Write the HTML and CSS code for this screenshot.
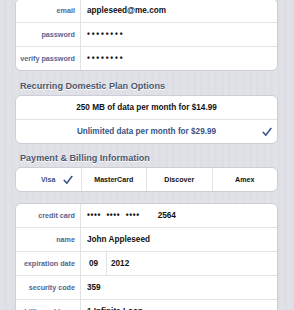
FILE: index.html
```html
<!DOCTYPE html>
<html>
<head>
<meta charset="utf-8">
<link rel="stylesheet" href="styles.css">
</head>
<body>
<div class="page">
  <section class="card card-account">
    <div class="row"><div class="label">email</div><div class="value">appleseed@me.com</div></div>
    <div class="row"><div class="label">password</div><div class="value dots">••••••••</div></div>
    <div class="row"><div class="label">verify password</div><div class="value dots">••••••••</div></div>
  </section>

  <h2 class="header header-plan">Recurring Domestic Plan Options</h2>
  <section class="card">
    <div class="option">250 MB of data per month for $14.99</div>
    <div class="option selected">Unlimited data per month for $29.99
      <svg class="check check-option" width="10" height="9" viewBox="0 0 10 9"><path d="M1.2 4.8 L3.8 7.8 L9 0.8" fill="none" stroke="#385487" stroke-width="1.5" stroke-linecap="round" stroke-linejoin="round"/></svg>
    </div>
  </section>

  <h2 class="header header-pay">Payment &amp; Billing Information</h2>
  <section class="card segmented">
    <div class="seg selected">Visa
      <svg class="check check-seg" width="10" height="9" viewBox="0 0 10 9"><path d="M1.2 4.8 L3.8 7.8 L9 0.8" fill="none" stroke="#385487" stroke-width="1.5" stroke-linecap="round" stroke-linejoin="round"/></svg>
    </div>
    <div class="seg">MasterCard</div>
    <div class="seg">Discover</div>
    <div class="seg">Amex</div>
  </section>

  <section class="card card-billing">
    <div class="row"><div class="label">credit card</div><div class="value"><span class="grp">••••</span><span class="grp">••••</span><span class="grp grp-last">••••</span><span>2564</span></div></div>
    <div class="row"><div class="label">name</div><div class="value">John Appleseed</div></div>
    <div class="row"><div class="label">expiration date</div><div class="month">09</div><div class="value year">2012</div></div>
    <div class="row"><div class="label">security code</div><div class="value">359</div></div>
    <div class="row"><div class="label">billing address</div><div class="value">1 Infinite Loop</div></div>
  </section>
</div>
</body>
</html>
```

FILE: styles.css
```css
html, body {
  margin: 0;
  padding: 0;
}
body {
  background-color: #dfe1e6;
  background-image: repeating-linear-gradient(90deg, #e0e2e7 0 4px, #dddfe4 4px 7px);
  font-family: "Liberation Sans", Arial, sans-serif;
  overflow: hidden;
  height: 310px;
}
.page {
  padding: 0 16px 0 15px;
}
.card {
  background: #fff;
  border: 1px solid #cbced4;
  border-radius: 6px;
  overflow: hidden;
}
.card-account {
  margin-top: -2px;
}
.card-billing {
  margin-top: 11px;
}
.row {
  display: flex;
  height: 23px;
}
.row + .row,
.option + .option {
  border-top: 1px solid #e2e3e5;
}
.label {
  box-sizing: border-box;
  width: 65px;
  flex: none;
  padding-right: 5px;
  border-right: 1px solid #e2e3e5;
  display: flex;
  align-items: center;
  justify-content: flex-end;
  color: #526691;
  font-weight: 700;
  font-size: 7.2px;
  white-space: nowrap;
}
.value {
  display: flex;
  align-items: center;
  padding-left: 6px;
  color: #111;
  font-weight: 700;
  font-size: 8.2px;
  white-space: nowrap;
}
.dots {
  letter-spacing: 1.8px;
}
.grp {
  letter-spacing: 0.6px;
  margin-right: 5.5px;
}
.grp-last {
  margin-right: 18px;
}
.month {
  box-sizing: border-box;
  width: 26px;
  flex: none;
  border-right: 1px solid #e2e3e5;
  display: flex;
  align-items: center;
  justify-content: center;
  color: #111;
  font-weight: 700;
  font-size: 8.2px;
}
.year {
  padding-left: 4px;
}
.header {
  margin: 9px 0 3px 5px;
  font-size: 9.1px;
  line-height: 12px;
  font-weight: 700;
  color: #4c566c;
  text-shadow: 0 1px 0 #fff;
}
.header-pay {
  margin-top: 8px;
}
.option {
  position: relative;
  height: 23px;
  display: flex;
  align-items: center;
  justify-content: center;
  font-weight: 700;
  font-size: 8.2px;
  color: #111;
}
.option.selected,
.seg.selected {
  color: #385487;
}
.check {
  position: absolute;
  top: 50%;
  transform: translateY(-50%);
}
.check-option {
  right: 5px;
}
.segmented {
  display: flex;
  height: 23px;
}
.seg {
  position: relative;
  flex: 1;
  display: flex;
  align-items: center;
  justify-content: center;
  font-weight: 700;
  font-size: 7.1px;
  color: #111;
}
.seg + .seg {
  border-left: 1px solid #e2e3e5;
}
.check-seg {
  right: 8px;
}
```
